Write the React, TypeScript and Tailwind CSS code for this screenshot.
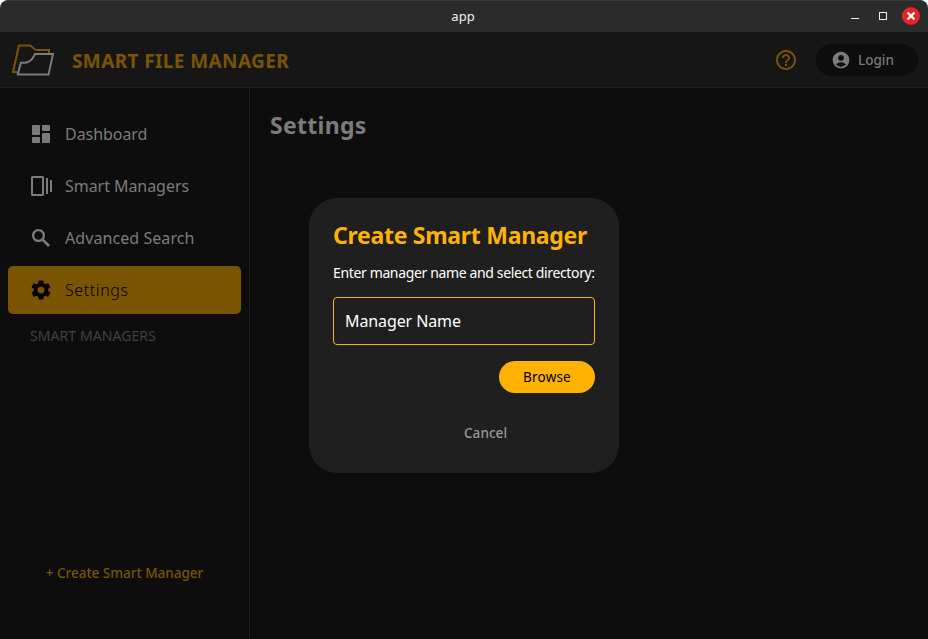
import React from "react";
import { MdAccountCircle, MdHelpOutline, MdSettings } from "react-icons/md";

function TitleBar() {
  return (
    <div className="relative flex h-8 shrink-0 items-center justify-end rounded-t-lg border-t border-[#3a3a3a] bg-[#2b2b2b] pr-2">
      <span className="absolute left-1/2 top-[6px] w-10 -translate-x-[21px] text-center text-[13px] leading-[18px] text-[#f0f0f0]">app</span>
      <svg width="70" height="24" viewBox="850 4 70 24" className="relative -top-px">
        <rect x="851" y="18" width="8" height="1" fill="#f2f2f2" />
        <rect x="879.5" y="12.5" width="7" height="7" fill="none" stroke="#f2f2f2" />
        <circle cx="911" cy="16" r="9" fill="#ed2226" />
        <path d="M907.500 12.500l7 7M914.500 12.500l-7 7" stroke="#fff" strokeWidth="2.400" />
      </svg>
    </div>
  );
}

function Logo() {
  return (
    <svg width="44" height="36" viewBox="11 42 44 36" fill="none" strokeWidth="2">
      <path d="M17.500 72H13L19 45.500H29.500C33 46 33.500 50 37 50H49V53" stroke="#7a5400" />
      <path d="M17.800 74.600L20.800 62.700H25C31 62 33 58 35 54H53L48.500 74.600Z" stroke="#7b7b7b" />
    </svg>
  );
}

function Header() {
  return (
    <header className="flex h-14 shrink-0 items-center border-b border-[#1f1f1f] bg-[#161616] pl-[11px] pr-[10px]">
      <Logo />
      <h1 className="ml-[17px] whitespace-nowrap pt-[3px] text-[19px] font-bold tracking-[0.39px] text-[#7a5400]">SMART FILE MANAGER</h1>
      <MdHelpOutline className="ml-auto size-6 text-[#7a5400]" />
      <button className="ml-[18px] flex h-8 w-[102px] items-center rounded-full bg-[#0d0d0d] pl-[15px] text-[#7b7b7b]">
        <MdAccountCircle className="size-5" />
        <span className="ml-[7px] pt-px text-[13.500px] font-medium">Login</span>
      </button>
    </header>
  );
}

function DashboardIcon() {
  return (
    <svg width="24" height="24" viewBox="0 0 24 24" fill="currentColor">
      <rect x="3" y="3" width="8" height="10" rx="0.800" />
      <rect x="3" y="15" width="8" height="6" rx="0.800" />
      <rect x="13" y="3" width="8" height="6" rx="0.800" />
      <rect x="13" y="11" width="8" height="10" rx="0.800" />
    </svg>
  );
}

function ManagersIcon() {
  return (
    <svg width="24" height="24" viewBox="0 0 24 24" fill="currentColor">
      <rect x="3" y="3" width="11" height="18" rx="0.500" fill="none" stroke="currentColor" strokeWidth="2" />
      <rect x="17" y="4" width="2" height="16" />
      <rect x="21" y="6" width="2" height="12" />
    </svg>
  );
}

function SearchIcon() {
  return (
    <svg width="24" height="24" viewBox="0 0 24 24" fill="none" stroke="currentColor">
      <circle cx="9.500" cy="9.500" r="5.400" strokeWidth="2.300" />
      <path d="M13.600 13.600L20 20" strokeWidth="2.700" />
    </svg>
  );
}

function NavItem({ icon, label, track, active }: { icon: React.ReactNode; label: string; track: string; active?: boolean }) {
  return (
    <div className={`flex h-12 items-center rounded-[5px] pl-[21px] ${active ? "bg-[#7a5400] font-light text-black" : "text-[#7b7b7b]"}`}>
      {icon}
      <span className={`ml-3 whitespace-nowrap text-[16px] ${track}`}>{label}</span>
    </div>
  );
}

function Sidebar() {
  return (
    <aside className="flex w-[250px] shrink-0 flex-col border-r border-[#1f1f1f] px-2 pt-[22px]">
      <nav className="flex flex-col gap-1">
        <NavItem icon={<DashboardIcon />} label="Dashboard" track="tracking-[-0.05px]" />
        <NavItem icon={<ManagersIcon />} label="Smart Managers" track="tracking-[-0.05px]" />
        <NavItem icon={<SearchIcon />} label="Advanced Search" track="tracking-[0.07px]" />
        <NavItem icon={<MdSettings className="size-6" />} label="Settings" track="tracking-[0.6px]" active />
      </nav>
      <p className="ml-[22px] mt-3 whitespace-nowrap text-[14px] leading-5 tracking-[0.08px] text-[#414145]">SMART MANAGERS</p>
      <button className="mb-14 mt-auto whitespace-nowrap text-[13.500px] font-medium leading-5 text-[#7a5400]">+ Create Smart Manager</button>
    </aside>
  );
}

function CreateDialog() {
  return (
    <section className="absolute left-[309px] top-[198px] flex h-[275px] w-[310px] flex-col rounded-[28px] bg-[#1f1f1f] px-6 pt-[21px]">
      <h2 className="whitespace-nowrap text-[23px] font-bold leading-8 tracking-[-0.28px] text-[#ffb300]">Create Smart Manager</h2>
      <p className="mt-3 whitespace-nowrap text-[14px] leading-5 tracking-[-0.36px] text-white">Enter manager name and select directory:</p>
      <div className="mt-[14px] flex h-12 shrink-0 items-center rounded border border-[#ffb300] pl-[11px] text-[16px] tracking-[-0.1px] text-white">
        <span>Manager Name</span>
      </div>
      <button className="mt-4 flex h-8 w-24 shrink-0 items-center justify-center self-end rounded-full bg-[#ffb300] text-[13.500px] tracking-[0.2px] text-black">
        <span>Browse</span>
      </button>
      <button className="ml-[131px] mt-[30px] self-start text-[13.500px] font-medium leading-5 tracking-[0.05px] text-[#979797]">Cancel</button>
    </section>
  );
}

export default function App() {
  return (
    <div className="relative flex h-[639px] w-[928px] flex-col overflow-hidden bg-white font-['Noto_Sans',sans-serif]">
      <TitleBar />
      <Header />
      <div className="flex min-h-0 flex-1 bg-[#0d0d0d]">
        <Sidebar />
        <main className="flex-1 pl-5 pt-[21px]">
          <h2 className="text-[23px] font-bold leading-8 tracking-[0.3px] text-[#7b7b7b]"><span>Settings</span></h2>
        </main>
      </div>
      <CreateDialog />
    </div>
  );
}
